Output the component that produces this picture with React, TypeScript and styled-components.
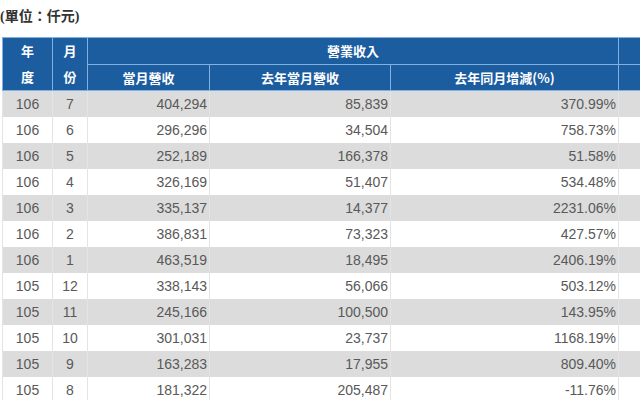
import styled, { createGlobalStyle } from 'styled-components';

const GlobalStyle = createGlobalStyle`
  html, body {
    margin: 0;
    padding: 0;
    background: #fff;
    overflow: hidden;
  }
  body {
    font-family: "Liberation Sans", Arial, sans-serif;
  }
`;

const Page = styled.div`
  width: 640px;
  height: 400px;
  overflow: hidden;
  padding-top: 7px;
  box-sizing: border-box;
`;

const Unit = styled.div`
  font-family: "Liberation Serif", "Noto Sans CJK TC", serif;
  font-weight: bold;
  font-size: 14px;
  line-height: 20px;
  color: #333;
  margin: 0 0 10px 0;
`;

const Table = styled.table`
  border-collapse: collapse;
  table-layout: fixed;
  width: 680px;
  margin-left: 2px;
`;

const Th = styled.th`
  background: #1c5d9f;
  color: #fff;
  font-family: "Noto Sans CJK TC", sans-serif;
  font-weight: bold;
  font-size: 13px;
  height: 25px;
  padding: 0;
  border: 1px solid #7fb2e2;
  text-align: center;
  line-height: 25px;
`;

const Stack = styled.span`
  display: block;
  line-height: 26px;
`;

const Td = styled.td<{ $align?: 'center' | 'right' }>`
  height: 26px;
  padding: 0 2px 0 0;
  font-size: 14px;
  color: #595959;
  text-align: ${(p) => p.$align ?? 'right'};
  border-left: 1px solid #e4e4e4;
  border-right: 1px solid #e4e4e4;
  ${(p) => (p.$align === 'center' ? 'padding: 0;' : '')}
`;

const Row = styled.tr<{ $shade: boolean }>`
  background: ${(p) => (p.$shade ? '#dcdcdc' : '#fff')};
`;

const rows = [
  ['106', '7', '404,294', '85,839', '370.99%'],
  ['106', '6', '296,296', '34,504', '758.73%'],
  ['106', '5', '252,189', '166,378', '51.58%'],
  ['106', '4', '326,169', '51,407', '534.48%'],
  ['106', '3', '335,137', '14,377', '2231.06%'],
  ['106', '2', '386,831', '73,323', '427.57%'],
  ['106', '1', '463,519', '18,495', '2406.19%'],
  ['105', '12', '338,143', '56,066', '503.12%'],
  ['105', '11', '245,166', '100,500', '143.95%'],
  ['105', '10', '301,031', '23,737', '1168.19%'],
  ['105', '9', '163,283', '17,955', '809.40%'],
  ['105', '8', '181,322', '205,487', '-11.76%'],
];

export default function App() {
  return (
    <Page>
      <GlobalStyle />
      <Unit>(單位：仟元)</Unit>
      <Table>
        <colgroup>
          <col style={{ width: 50 }} />
          <col style={{ width: 35 }} />
          <col style={{ width: 122 }} />
          <col style={{ width: 181 }} />
          <col style={{ width: 228 }} />
          <col style={{ width: 64 }} />
        </colgroup>
        <thead>
          <tr>
            <Th rowSpan={2}>
              <Stack>年</Stack>
              <Stack>度</Stack>
            </Th>
            <Th rowSpan={2}>
              <Stack>月</Stack>
              <Stack>份</Stack>
            </Th>
            <Th colSpan={3}>營業收入</Th>
            <Th />
          </tr>
          <tr>
            <Th>當月營收</Th>
            <Th>去年當月營收</Th>
            <Th>去年同月增減(%)</Th>
            <Th />
          </tr>
        </thead>
        <tbody>
          {rows.map((r, i) => (
            <Row key={i} $shade={i % 2 === 0}>
              <Td $align="center">{r[0]}</Td>
              <Td $align="center">{r[1]}</Td>
              <Td>{r[2]}</Td>
              <Td>{r[3]}</Td>
              <Td>{r[4]}</Td>
              <Td />
            </Row>
          ))}
        </tbody>
      </Table>
    </Page>
  );
}
